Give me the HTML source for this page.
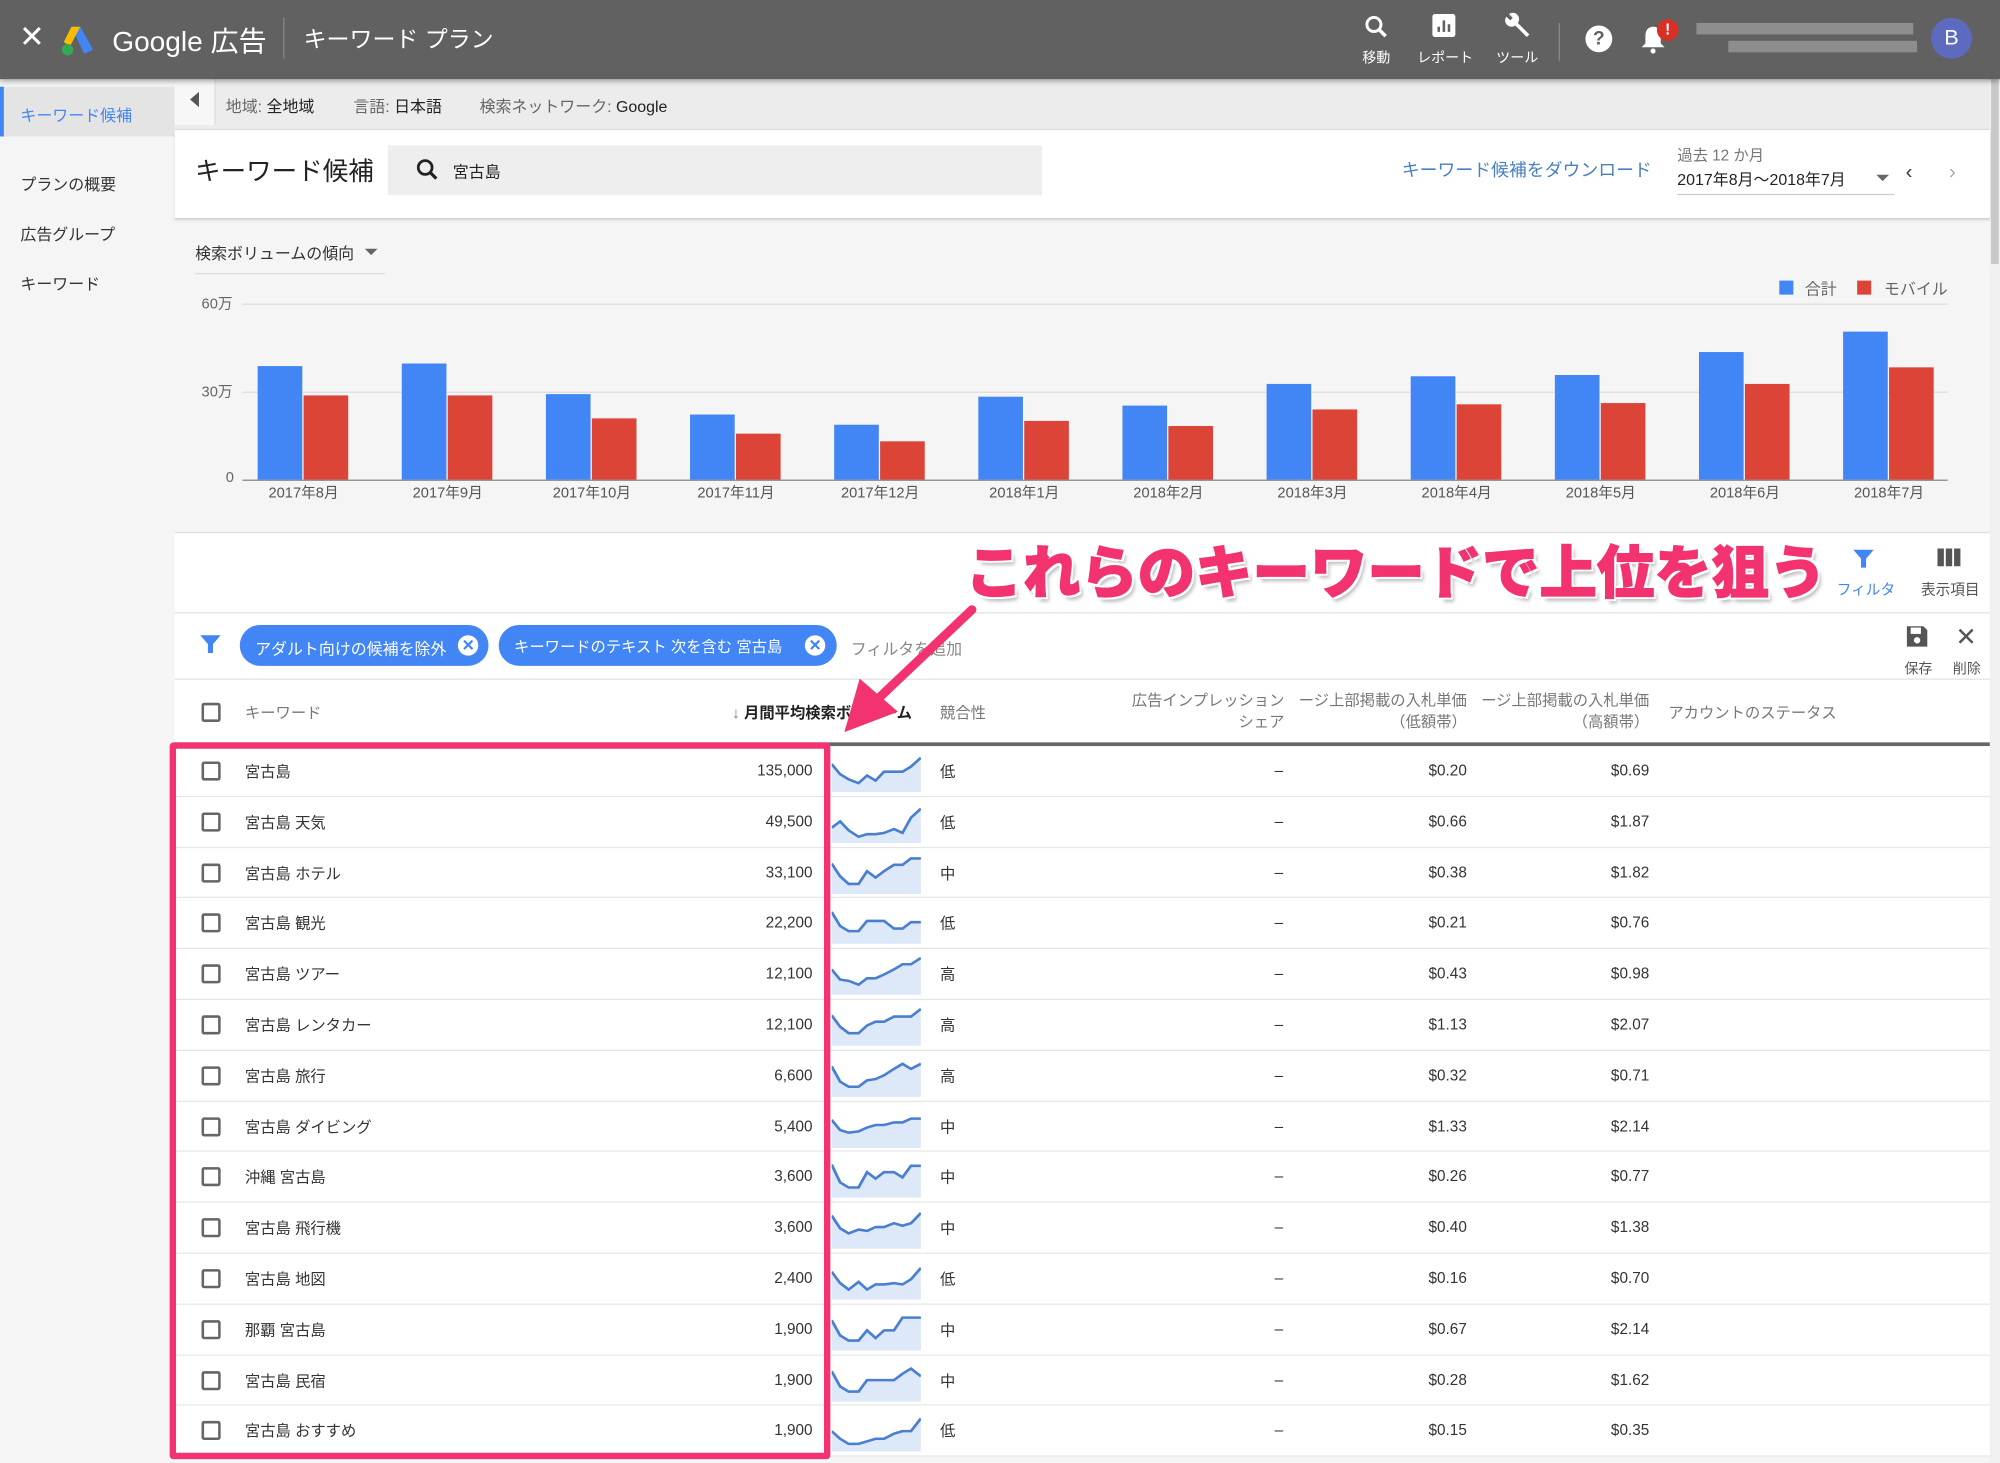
<!DOCTYPE html>
<html><head><meta charset="utf-8">
<style>
*{margin:0;padding:0;box-sizing:border-box}
html,body{width:2000px;height:1463px;overflow:hidden;background:#fff}
#w{position:absolute;left:0;top:0;width:1568px;height:1147px;transform:scale(1.27551);transform-origin:0 0;font-family:"Liberation Sans","Noto Sans CJK JP",sans-serif;color:#333;background:#f5f5f5}
.a{position:absolute}
.top{left:0;top:0;width:1568px;height:62px;background:#616161;box-shadow:0 2px 4px rgba(0,0,0,.35);z-index:5;color:#fff}
.side{left:0;top:62px;width:137px;height:1085px;background:#f5f5f5}
.sb{left:1560px;top:62px;width:8px;height:1085px;background:#f0f0f0}
.t{font-size:12.5px;white-space:nowrap}
.row{position:absolute;left:137px;width:1423px;height:39.8px;border-bottom:1px solid #e6e6e6;background:#fff;font-size:12px}
.row span{position:absolute;top:12px;white-space:nowrap}
.row span.j{top:11px}
.cb{position:absolute;left:21px;top:12px;width:15px;height:15px;border:2px solid #666;border-radius:2px}
.bar{position:absolute;width:35px;bottom:0}
.bl{background:#4285f4}.rd{background:#db4437}
.ml{position:absolute;top:4px;font-size:11.5px;color:#555;width:90px;text-align:center}
.row svg{position:absolute;left:515px;top:6px}
</style></head><body><div id="w">
<div class="a top">
 <div class="a" style="left:15px;top:15px;font-size:24px;">✕</div>
 <svg class="a" style="left:46px;top:17px" width="30" height="28" viewBox="0 0 30 28"><path d="M10 4 L17 4 L27 22 L20 25 Z" fill="#4285f4"/><path d="M10 4 L17 4 L9 19 L4 16 Z" fill="#fbbc04"/><circle cx="7" cy="22" r="4.5" fill="#34a853"/></svg>
 <div class="a" style="left:88px;top:15px;font-size:22px;">Google 広告</div>
 <div class="a" style="left:222px;top:14px;width:1px;height:32px;background:#888"></div>
 <div class="a" style="left:238px;top:17px;font-size:18px;">キーワード プラン</div>
 <svg class="a" style="left:1068px;top:10px" width="22" height="22" viewBox="0 0 24 24"><circle cx="10" cy="10" r="6" fill="none" stroke="#fff" stroke-width="2.5"/><path d="M14 14l6 6" stroke="#fff" stroke-width="3"/></svg>
 <div class="a t" style="left:1068px;top:37px;font-size:11px">移動</div>
 <svg class="a" style="left:1122px;top:10px" width="20" height="20"><rect x="1" y="1" width="18" height="18" rx="2" fill="#fff"/><path d="M6 15v-4M10 15V6M14 15v-6" stroke="#616161" stroke-width="2"/></svg>
 <div class="a t" style="left:1111px;top:37px;font-size:11px">レポート</div>
 <svg class="a" style="left:1177px;top:9px" width="24" height="24" viewBox="0 0 24 24"><path d="M4 4 a5 5 0 0 0 7 7 l9 9 l2-2 -9-9 a5 5 0 0 0 -7-7 l3 3 -2 2z" fill="#fff"/></svg>
 <div class="a t" style="left:1173px;top:37px;font-size:11px">ツール</div>
 <div class="a" style="left:1222px;top:18px;width:1px;height:30px;background:#888"></div>
 <div class="a" style="left:1243px;top:20px;width:21px;height:21px;border-radius:50%;background:#fff;color:#616161;font-weight:bold;font-size:15px;text-align:center;line-height:21px">?</div>
 <svg class="a" style="left:1285px;top:19px" width="22" height="24"><path d="M11 2c-4 0-6 3-6 7v6l-3 3h18l-3-3V9c0-4-2-7-6-7z" fill="#fff"/><circle cx="11" cy="21" r="2" fill="#fff"/></svg>
 <div class="a" style="left:1299px;top:15px;width:17px;height:17px;border-radius:50%;background:#d93025;font-size:12px;font-weight:bold;text-align:center;line-height:17px">!</div>
 <div class="a" style="left:1330px;top:18px;width:170px;height:9px;background:#9a9a9a;opacity:.8"></div>
 <div class="a" style="left:1355px;top:32px;width:148px;height:9px;background:#999;opacity:.8"></div>
 <div class="a" style="left:1514px;top:14px;width:32px;height:32px;border-radius:50%;background:#5c6bc0;text-align:center;line-height:32px;font-size:17px">B</div>
</div>
<div class="a side">
 <div class="a" style="left:0;top:6px;width:137px;height:39px;background:#e4e4e4;border-left:3px solid #4285f4"></div>
 <div class="a t" style="left:16px;top:18px;color:#4285f4">キーワード候補</div>
 <div class="a t" style="left:16px;top:72px">プランの概要</div>
 <div class="a t" style="left:16px;top:111px">広告グループ</div>
 <div class="a t" style="left:16px;top:150px">キーワード</div>
</div>
<div class="a sb"><div class="a" style="left:1px;top:0;width:6px;height:145px;background:#c8c8c8"></div></div>
<div class="a" style="left:137px;top:62px;width:1423px;height:40px;background:#ececec;border-bottom:1px solid #ddd"></div>
<div class="a" style="left:137px;top:62px;width:32px;height:36px;background:#f7f7f7;border-right:1px solid #ddd"></div>
<div class="a" style="left:149px;top:72px;width:0;height:0;border-top:6px solid transparent;border-bottom:6px solid transparent;border-right:7px solid #555"></div>
<div class="a t" style="left:177px;top:73px;color:#666">地域: <span style="color:#222">全地域</span></div>
<div class="a t" style="left:277px;top:73px;color:#666">言語: <span style="color:#222">日本語</span></div>
<div class="a t" style="left:376px;top:73px;color:#666">検索ネットワーク: <span style="color:#222">Google</span></div>
<div class="a" style="left:137px;top:102px;width:1423px;height:70px;background:#fff;border-bottom:1px solid #ccc;box-shadow:0 1px 2px rgba(0,0,0,.1)"></div>
<div class="a" style="left:153px;top:118px;font-size:20px;color:#222">キーワード候補</div>
<div class="a" style="left:304px;top:114px;width:513px;height:39px;background:#eee"></div>
<svg class="a" style="left:325px;top:123px" width="20" height="20" viewBox="0 0 24 24"><circle cx="10" cy="10" r="6.5" fill="none" stroke="#222" stroke-width="2.6"/><path d="M14.5 14.5l6 6" stroke="#222" stroke-width="3"/></svg>
<div class="a t" style="left:355px;top:124px;color:#222">宮古島</div>
<div class="a" style="left:1099px;top:123px;font-size:14px;color:#4a7fc0">キーワード候補をダウンロード</div>
<div class="a t" style="left:1315px;top:113px;font-size:12px;color:#777">過去 12 か月</div>
<div class="a t" style="left:1315px;top:130px;color:#222">2017年8月～2018年7月</div>
<div class="a" style="left:1315px;top:152px;width:170px;height:1px;background:#ccc"></div>
<div class="a" style="left:1471px;top:137px;border-left:5px solid transparent;border-right:5px solid transparent;border-top:5px solid #666"></div>
<div class="a" style="left:1494px;top:127px;font-size:16px;color:#333">‹</div>
<div class="a" style="left:1528px;top:127px;font-size:16px;color:#aaa">›</div>
<div class="a t" style="left:153px;top:188px;color:#333">検索ボリュームの傾向</div>
<div class="a" style="left:286px;top:195px;border-left:5px solid transparent;border-right:5px solid transparent;border-top:5px solid #666"></div>
<div class="a" style="left:153px;top:214px;width:149px;height:1px;background:#ddd"></div>
<div class="a" style="left:1395px;top:220px;width:11px;height:11px;background:#4285f4"></div>
<div class="a t" style="left:1415px;top:216px;color:#666">合計</div>
<div class="a" style="left:1456px;top:220px;width:11px;height:11px;background:#db4437"></div>
<div class="a t" style="left:1477px;top:216px;color:#666">モバイル</div>
<div class="a t" style="left:158px;top:230px;font-size:11.5px;color:#666">60万</div>
<div class="a t" style="left:158px;top:299px;font-size:11.5px;color:#666">30万</div>
<div class="a t" style="left:177px;top:369px;font-size:11.5px;color:#666">0</div>
<div class="a" style="left:190px;top:238px;width:1337px;height:1px;background:#ddd"></div>
<div class="a" style="left:190px;top:307px;width:1337px;height:1px;background:#ddd"></div>
<div class="a" style="left:190px;top:376px;width:1337px;height:1px;background:#888"></div>
<div class="a" style="left:202px;top:238px;width:1330px;height:138px">
 <div class="bar bl" style="left:0;height:89px"></div><div class="bar rd" style="left:36px;height:66px"></div>
 <div class="bar bl" style="left:113px;height:91px"></div><div class="bar rd" style="left:149px;height:66px"></div>
 <div class="bar bl" style="left:226px;height:67px"></div><div class="bar rd" style="left:262px;height:48px"></div>
 <div class="bar bl" style="left:339px;height:51px"></div><div class="bar rd" style="left:375px;height:36px"></div>
 <div class="bar bl" style="left:452px;height:43px"></div><div class="bar rd" style="left:488px;height:30px"></div>
 <div class="bar bl" style="left:565px;height:65px"></div><div class="bar rd" style="left:601px;height:46px"></div>
 <div class="bar bl" style="left:678px;height:58px"></div><div class="bar rd" style="left:714px;height:42px"></div>
 <div class="bar bl" style="left:791px;height:75px"></div><div class="bar rd" style="left:827px;height:55px"></div>
 <div class="bar bl" style="left:904px;height:81px"></div><div class="bar rd" style="left:940px;height:59px"></div>
 <div class="bar bl" style="left:1017px;height:82px"></div><div class="bar rd" style="left:1053px;height:60px"></div>
 <div class="bar bl" style="left:1130px;height:100px"></div><div class="bar rd" style="left:1166px;height:75px"></div>
 <div class="bar bl" style="left:1243px;height:116px"></div><div class="bar rd" style="left:1279px;height:88px"></div>
</div>
<div class="a" style="left:0;top:374px;width:1568px;height:20px">
 <div class="ml" style="left:193px">2017年8月</div><div class="ml" style="left:306px">2017年9月</div><div class="ml" style="left:419px">2017年10月</div><div class="ml" style="left:532px">2017年11月</div><div class="ml" style="left:645px">2017年12月</div><div class="ml" style="left:758px">2018年1月</div><div class="ml" style="left:871px">2018年2月</div><div class="ml" style="left:984px">2018年3月</div><div class="ml" style="left:1097px">2018年4月</div><div class="ml" style="left:1210px">2018年5月</div><div class="ml" style="left:1323px">2018年6月</div><div class="ml" style="left:1436px">2018年7月</div>
</div>
<div class="a" style="left:137px;top:417px;width:1423px;height:64px;background:#fff;border-top:1px solid #e0e0e0;border-bottom:1px solid #e0e0e0"></div>
<svg class="a" style="left:1452px;top:430px" width="18" height="16"><path d="M1 1h16l-6 7v7h-4V8z" fill="#4285f4"/></svg>
<div class="a t" style="left:1440px;top:454px;font-size:11.5px;color:#4285f4">フィルタ</div>
<svg class="a" style="left:1519px;top:430px" width="18" height="14"><rect x="0" y="0" width="5" height="14" fill="#555"/><rect x="6.5" y="0" width="5" height="14" fill="#555"/><rect x="13" y="0" width="5" height="14" fill="#555"/></svg>
<div class="a t" style="left:1506px;top:454px;font-size:11.5px;color:#555">表示項目</div>
<div class="a" style="left:137px;top:481px;width:1423px;height:52px;background:#fff;border-bottom:1px solid #e0e0e0"></div>
<svg class="a" style="left:156px;top:497px" width="18" height="16"><path d="M1 1h16l-6 7v7h-4V8z" fill="#4285f4"/></svg>
<div class="a" style="left:188px;top:490px;width:195px;height:32px;border-radius:16px;background:#4285f4"></div>
<div class="a t" style="left:200px;top:498px;color:#fff">アダルト向けの候補を除外</div>
<div class="a" style="left:359px;top:498px;width:16px;height:16px;border-radius:50%;background:#fff;color:#4285f4;font-size:12px;font-weight:bold;text-align:center;line-height:16px">✕</div>
<div class="a" style="left:391px;top:490px;width:265px;height:32px;border-radius:16px;background:#4285f4"></div>
<div class="a t" style="left:403px;top:498px;color:#fff;font-size:12px">キーワードのテキスト 次を含む 宮古島</div>
<div class="a" style="left:631px;top:498px;width:16px;height:16px;border-radius:50%;background:#fff;color:#4285f4;font-size:12px;font-weight:bold;text-align:center;line-height:16px">✕</div>
<div class="a t" style="left:667px;top:498px;color:#888">フィルタを追加</div>
<svg class="a" style="left:1494px;top:490px" width="18" height="18"><path d="M1 1h13l3 3v13H1z" fill="#555"/><rect x="4" y="2" width="8" height="5" fill="#fff"/><circle cx="9" cy="12" r="2.5" fill="#fff"/></svg>
<div class="a t" style="left:1493px;top:516px;font-size:11px;color:#555">保存</div>
<div class="a" style="left:1533px;top:487px;font-size:20px;color:#555">✕</div>
<div class="a t" style="left:1531px;top:516px;font-size:11px;color:#555">削除</div>
<div class="a" style="left:137px;top:533px;width:1423px;height:52px;background:#fff;border-bottom:3px solid #666"></div>
<div class="a" style="left:158px;top:551px;width:15px;height:15px;border:2px solid #666;border-radius:2px"></div>
<div class="a t" style="left:192px;top:550px;font-size:12px;color:#777">キーワード</div>
<div class="a t" style="left:574px;top:550px;font-size:12px;color:#222;font-weight:bold"><span style="font-weight:normal;color:#777">↓</span> 月間平均検索ボリューム</div>
<div class="a t" style="left:737px;top:550px;font-size:12px;color:#777">競合性</div>
<div class="a t" style="left:880px;top:541px;font-size:12px;color:#777;text-align:right;width:127px;line-height:17px">広告インプレッション<br>シェア</div>
<div class="a t" style="left:1018px;top:541px;font-size:12px;color:#777;text-align:right;width:132px;line-height:17px;overflow:hidden">ージ上部掲載の入札単価<br>（低額帯）</div>
<div class="a t" style="left:1161px;top:541px;font-size:12px;color:#777;text-align:right;width:132px;line-height:17px;overflow:hidden">ージ上部掲載の入札単価<br>（高額帯）</div>
<div class="a t" style="left:1308px;top:550px;font-size:12px;color:#777">アカウントのステータス</div>
<div id="rows">
<div class="row" style="top:585px"><div class="cb"></div><span class="j" style="left:55px">宮古島</span><span style="right:923px">135,000</span><svg width="70" height="30" viewBox="0 0 63 30" preserveAspectRatio="none"><path d="M0 8L6 16L12 20L19 23L25 17L31 21L37 14L44 14L50 14L56 10L63 3V30H0Z" fill="#dde8f8"/><polyline points="0,8 6,16 12,20 19,23 25,17 31,21 37,14 44,14 50,14 56,10 63,3" fill="none" stroke="#4a7fd0" stroke-width="2"/></svg><span class="j" style="left:600px">低</span><span style="right:554px">–</span><span style="right:410px">$0.20</span><span style="right:267px">$0.69</span></div>
<div class="row" style="top:624.8px"><div class="cb"></div><span class="j" style="left:55px">宮古島 天気</span><span style="right:923px">49,500</span><svg width="70" height="30" viewBox="0 0 63 30" preserveAspectRatio="none"><path d="M0 18L6 13L12 20L19 25L25 23L31 23L37 22L44 19L50 22L56 10L63 3V30H0Z" fill="#dde8f8"/><polyline points="0,18 6,13 12,20 19,25 25,23 31,23 37,22 44,19 50,22 56,10 63,3" fill="none" stroke="#4a7fd0" stroke-width="2"/></svg><span class="j" style="left:600px">低</span><span style="right:554px">–</span><span style="right:410px">$0.66</span><span style="right:267px">$1.87</span></div>
<div class="row" style="top:664.6px"><div class="cb"></div><span class="j" style="left:55px">宮古島 ホテル</span><span style="right:923px">33,100</span><svg width="70" height="30" viewBox="0 0 63 30" preserveAspectRatio="none"><path d="M0 6L6 16L12 22L19 22L25 12L31 17L37 12L44 7L50 7L56 2L63 2V30H0Z" fill="#dde8f8"/><polyline points="0,6 6,16 12,22 19,22 25,12 31,17 37,12 44,7 50,7 56,2 63,2" fill="none" stroke="#4a7fd0" stroke-width="2"/></svg><span class="j" style="left:600px">中</span><span style="right:554px">–</span><span style="right:410px">$0.38</span><span style="right:267px">$1.82</span></div>
<div class="row" style="top:704.4px"><div class="cb"></div><span class="j" style="left:55px">宮古島 観光</span><span style="right:923px">22,200</span><svg width="70" height="30" viewBox="0 0 63 30" preserveAspectRatio="none"><path d="M0 5L6 16L12 20L19 20L25 12L31 12L37 12L44 18L50 18L56 13L63 13V30H0Z" fill="#dde8f8"/><polyline points="0,5 6,16 12,20 19,20 25,12 31,12 37,12 44,18 50,18 56,13 63,13" fill="none" stroke="#4a7fd0" stroke-width="2"/></svg><span class="j" style="left:600px">低</span><span style="right:554px">–</span><span style="right:410px">$0.21</span><span style="right:267px">$0.76</span></div>
<div class="row" style="top:744.2px"><div class="cb"></div><span class="j" style="left:55px">宮古島 ツアー</span><span style="right:923px">12,100</span><svg width="70" height="30" viewBox="0 0 63 30" preserveAspectRatio="none"><path d="M0 10L6 18L12 19L19 22L25 17L31 17L37 14L44 10L50 6L56 6L63 1V30H0Z" fill="#dde8f8"/><polyline points="0,10 6,18 12,19 19,22 25,17 31,17 37,14 44,10 50,6 56,6 63,1" fill="none" stroke="#4a7fd0" stroke-width="2"/></svg><span class="j" style="left:600px">高</span><span style="right:554px">–</span><span style="right:410px">$0.43</span><span style="right:267px">$0.98</span></div>
<div class="row" style="top:784px"><div class="cb"></div><span class="j" style="left:55px">宮古島 レンタカー</span><span style="right:923px">12,100</span><svg width="70" height="30" viewBox="0 0 63 30" preserveAspectRatio="none"><path d="M0 6L6 15L12 20L19 20L25 14L31 11L37 11L44 7L50 7L56 7L63 1V30H0Z" fill="#dde8f8"/><polyline points="0,6 6,15 12,20 19,20 25,14 31,11 37,11 44,7 50,7 56,7 63,1" fill="none" stroke="#4a7fd0" stroke-width="2"/></svg><span class="j" style="left:600px">高</span><span style="right:554px">–</span><span style="right:410px">$1.13</span><span style="right:267px">$2.07</span></div>
<div class="row" style="top:823.8px"><div class="cb"></div><span class="j" style="left:55px">宮古島 旅行</span><span style="right:923px">6,600</span><svg width="70" height="30" viewBox="0 0 63 30" preserveAspectRatio="none"><path d="M0 6L6 18L12 22L19 22L25 17L31 16L37 13L44 8L50 4L56 8L63 4V30H0Z" fill="#dde8f8"/><polyline points="0,6 6,18 12,22 19,22 25,17 31,16 37,13 44,8 50,4 56,8 63,4" fill="none" stroke="#4a7fd0" stroke-width="2"/></svg><span class="j" style="left:600px">高</span><span style="right:554px">–</span><span style="right:410px">$0.32</span><span style="right:267px">$0.71</span></div>
<div class="row" style="top:863.6px"><div class="cb"></div><span class="j" style="left:55px">宮古島 ダイビング</span><span style="right:923px">5,400</span><svg width="70" height="30" viewBox="0 0 63 30" preserveAspectRatio="none"><path d="M0 8L6 16L12 18L19 17L25 14L31 12L37 12L44 10L50 10L56 7L63 7V30H0Z" fill="#dde8f8"/><polyline points="0,8 6,16 12,18 19,17 25,14 31,12 37,12 44,10 50,10 56,7 63,7" fill="none" stroke="#4a7fd0" stroke-width="2"/></svg><span class="j" style="left:600px">中</span><span style="right:554px">–</span><span style="right:410px">$1.33</span><span style="right:267px">$2.14</span></div>
<div class="row" style="top:903.4px"><div class="cb"></div><span class="j" style="left:55px">沖縄 宮古島</span><span style="right:923px">3,600</span><svg width="70" height="30" viewBox="0 0 63 30" preserveAspectRatio="none"><path d="M0 4L6 18L12 22L19 22L25 10L31 15L37 10L44 10L50 14L56 5L63 5V30H0Z" fill="#dde8f8"/><polyline points="0,4 6,18 12,22 19,22 25,10 31,15 37,10 44,10 50,14 56,5 63,5" fill="none" stroke="#4a7fd0" stroke-width="2"/></svg><span class="j" style="left:600px">中</span><span style="right:554px">–</span><span style="right:410px">$0.26</span><span style="right:267px">$0.77</span></div>
<div class="row" style="top:943.2px"><div class="cb"></div><span class="j" style="left:55px">宮古島 飛行機</span><span style="right:923px">3,600</span><svg width="70" height="30" viewBox="0 0 63 30" preserveAspectRatio="none"><path d="M0 4L6 14L12 18L19 15L25 16L31 13L37 13L44 10L50 12L56 10L63 2V30H0Z" fill="#dde8f8"/><polyline points="0,4 6,14 12,18 19,15 25,16 31,13 37,13 44,10 50,12 56,10 63,2" fill="none" stroke="#4a7fd0" stroke-width="2"/></svg><span class="j" style="left:600px">中</span><span style="right:554px">–</span><span style="right:410px">$0.40</span><span style="right:267px">$1.38</span></div>
<div class="row" style="top:983px"><div class="cb"></div><span class="j" style="left:55px">宮古島 地図</span><span style="right:923px">2,400</span><svg width="70" height="30" viewBox="0 0 63 30" preserveAspectRatio="none"><path d="M0 8L6 17L12 22L19 16L25 22L31 18L37 18L44 17L50 18L56 14L63 5V30H0Z" fill="#dde8f8"/><polyline points="0,8 6,17 12,22 19,16 25,22 31,18 37,18 44,17 50,18 56,14 63,5" fill="none" stroke="#4a7fd0" stroke-width="2"/></svg><span class="j" style="left:600px">低</span><span style="right:554px">–</span><span style="right:410px">$0.16</span><span style="right:267px">$0.70</span></div>
<div class="row" style="top:1022.8px"><div class="cb"></div><span class="j" style="left:55px">那覇 宮古島</span><span style="right:923px">1,900</span><svg width="70" height="30" viewBox="0 0 63 30" preserveAspectRatio="none"><path d="M0 6L6 18L12 22L19 22L25 14L31 20L37 14L44 14L50 4L56 4L63 4V30H0Z" fill="#dde8f8"/><polyline points="0,6 6,18 12,22 19,22 25,14 31,20 37,14 44,14 50,4 56,4 63,4" fill="none" stroke="#4a7fd0" stroke-width="2"/></svg><span class="j" style="left:600px">中</span><span style="right:554px">–</span><span style="right:410px">$0.67</span><span style="right:267px">$2.14</span></div>
<div class="row" style="top:1062.6px"><div class="cb"></div><span class="j" style="left:55px">宮古島 民宿</span><span style="right:923px">1,900</span><svg width="70" height="30" viewBox="0 0 63 30" preserveAspectRatio="none"><path d="M0 6L6 18L12 22L19 22L25 13L31 13L37 13L44 13L50 8L56 4L63 10V30H0Z" fill="#dde8f8"/><polyline points="0,6 6,18 12,22 19,22 25,13 31,13 37,13 44,13 50,8 56,4 63,10" fill="none" stroke="#4a7fd0" stroke-width="2"/></svg><span class="j" style="left:600px">中</span><span style="right:554px">–</span><span style="right:410px">$0.28</span><span style="right:267px">$1.62</span></div>
<div class="row" style="top:1102.4px"><div class="cb"></div><span class="j" style="left:55px">宮古島 おすすめ</span><span style="right:923px">1,900</span><svg width="70" height="30" viewBox="0 0 63 30" preserveAspectRatio="none"><path d="M0 14L6 20L12 24L19 24L25 22L31 20L37 20L44 16L50 14L56 14L63 4V30H0Z" fill="#dde8f8"/><polyline points="0,14 6,20 12,24 19,24 25,22 31,20 37,20 44,16 50,14 56,14 63,4" fill="none" stroke="#4a7fd0" stroke-width="2"/></svg><span class="j" style="left:600px">低</span><span style="right:554px">–</span><span style="right:410px">$0.15</span><span style="right:267px">$0.35</span></div>
</div>
<div class="a" style="left:133px;top:582px;width:518px;height:562px;border:5px solid #f2336f;border-radius:3px"></div>
<svg class="a" style="left:640px;top:470px" width="140" height="120"><path d="M122 8 L44 82" stroke="#f2336f" stroke-width="7" stroke-linecap="round"/><path d="M22 104 L34 62 L64 88 Z" fill="#f2336f"/></svg>
<div class="a" style="left:757px;top:413px;font-size:45px;font-weight:900;color:#f2336f;white-space:nowrap;letter-spacing:0;-webkit-text-stroke:1px #f2336f;text-shadow:2px 2px 0 #fff,-2px -2px 0 #fff,2px -2px 0 #fff,-2px 2px 0 #fff,3px 4px 3px rgba(0,0,0,.25)">これらのキーワードで上位を狙う</div>
</div></body></html>
